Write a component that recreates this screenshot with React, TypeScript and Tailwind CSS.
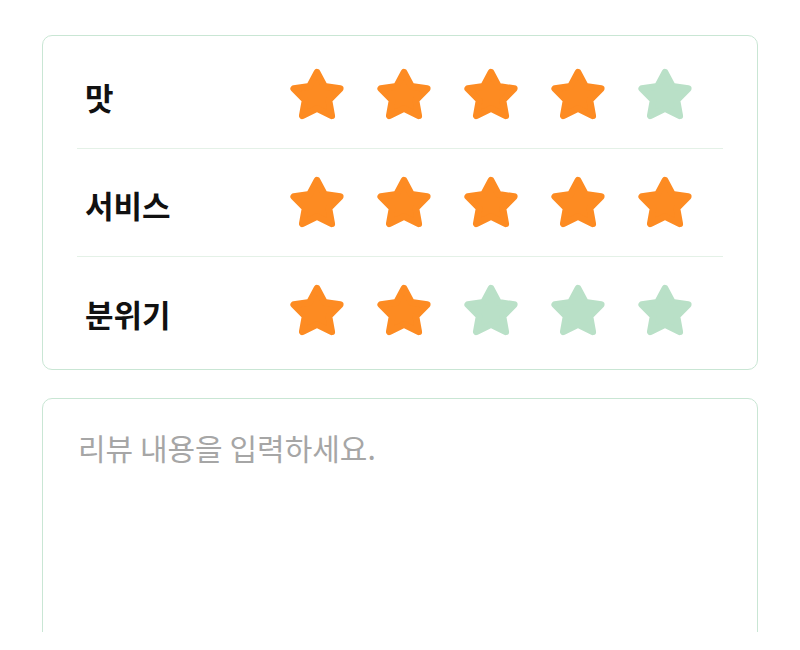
import React from 'react'

const ratings = [
  { label: '맛', score: 4 },
  { label: '서비스', score: 5 },
  { label: '분위기', score: 2 },
]

function Star({ on }: { on: boolean }) {
  const color = on ? '#fd8b22' : '#b9e0c7'
  return (
    <svg viewBox="0 0 24 24" className="w-[58px] h-[58px] shrink-0">
      <polygon
        points="12,2.6 15.09,8.46 21.6,9.37 16.9,14.14 18.08,20.6 12,17.6 5.92,20.6 7.1,14.14 2.4,9.37 8.91,8.46"
        fill={color}
        stroke={color}
        strokeWidth={2.8}
        strokeLinejoin="round"
      />
    </svg>
  )
}

export default function App() {
  return (
    <div
      className="h-[632px] overflow-hidden bg-white px-[42px] pt-[35px]"
      style={{ fontFamily: '"Noto Sans CJK KR", "Noto Sans", sans-serif' }}
    >
      {/* Ratings */}
      <div className="border border-[#c9e6d4] rounded-[10px] px-[34px] pt-[5px] pb-[4px]">
        {ratings.map((r, i) => (
          <div
            key={r.label}
            className={
              'flex items-center h-[108px] pl-2 ' +
              (i < ratings.length - 1 ? 'border-b border-[#e4f1e7]' : '')
            }
          >
            <span className="w-[203px] pt-[4px] text-[31px] font-bold text-[#111] leading-none">
              {r.label}
            </span>
            <div className="flex gap-[29px]">
              {[1, 2, 3, 4, 5].map((n) => (
                <Star key={n} on={n <= r.score} />
              ))}
            </div>
          </div>
        ))}
      </div>

      {/* Review text */}
      <div className="mt-[28px] border border-[#c9e6d4] rounded-[10px] h-[320px] px-[35px] pt-[27px]">
        <textarea
          className="w-full h-full resize-none outline-none text-[30px] text-[#333] placeholder:text-[#a6a6a6] bg-transparent leading-[1.4]"
          style={{ fontFamily: '"Noto Sans CJK KR", "Noto Sans", sans-serif' }}
          placeholder="리뷰 내용을 입력하세요."
        />
      </div>
    </div>
  )
}
